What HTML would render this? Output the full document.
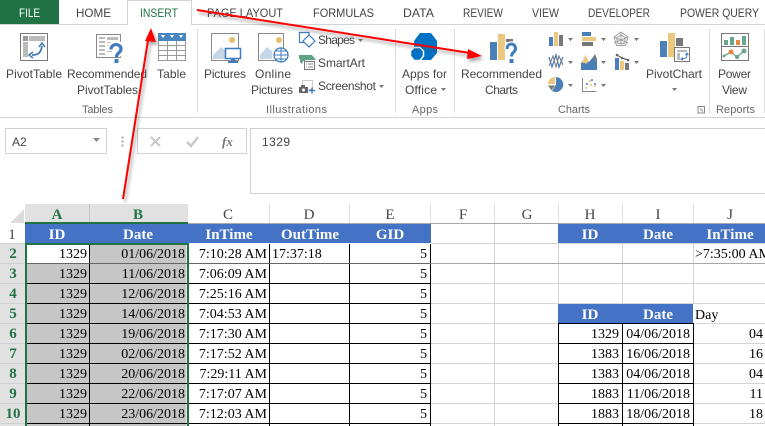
<!DOCTYPE html>
<html><head><meta charset="utf-8"><style>
html,body{margin:0;padding:0;background:#fff;width:765px;height:426px;overflow:hidden}
svg{display:block}
.u{font-family:"Liberation Sans",sans-serif;font-size:12px;fill:#444}
.t{font-family:"Liberation Sans",sans-serif;font-size:12px;fill:#444}
.g{font-family:"Liberation Sans",sans-serif;font-size:11px;fill:#666}
.c{font-family:"Liberation Serif",serif;font-size:14px;fill:#000}
.r{text-anchor:end}
.h{font-family:"Liberation Serif",serif;font-size:15px;font-weight:bold;fill:#fff;text-anchor:middle}
.l{font-family:"Liberation Serif",serif;font-size:15px;fill:#444;text-anchor:middle}
.s{font-family:"Liberation Serif",serif;font-size:15px;font-weight:bold;fill:#217346;text-anchor:middle}
</style></head><body>
<svg width="765" height="426" viewBox="0 0 765 426" xmlns="http://www.w3.org/2000/svg">
<defs><filter id="sh" x="-20%" y="-20%" width="140%" height="140%"><feGaussianBlur stdDeviation="1.5"/></filter></defs>
<rect width="765" height="426" fill="#fff"/>
<!-- tabs -->
<rect x="0" y="0" width="59" height="25" fill="#217346"/>
<rect x="0" y="24" width="765" height="1" fill="#d4d4d4"/>
<path d="M127.500 25V.5H191.500V25" fill="#fff" stroke="#d4d4d4"/>
<rect x="128" y="24" width="63" height="1" fill="#fff"/>
<text class="t" x="19" y="17" textLength="21" lengthAdjust="spacingAndGlyphs" style="fill:#fff">FILE</text>
<text class="t" x="76" y="17" textLength="35" lengthAdjust="spacingAndGlyphs">HOME</text>
<text class="t" x="140" y="17" textLength="38" lengthAdjust="spacingAndGlyphs" style="fill:#217346">INSERT</text>
<text class="t" x="207" y="17" textLength="76" lengthAdjust="spacingAndGlyphs">PAGE LAYOUT</text>
<text class="t" x="313" y="17" textLength="61" lengthAdjust="spacingAndGlyphs">FORMULAS</text>
<text class="t" x="403" y="17" textLength="31" lengthAdjust="spacingAndGlyphs">DATA</text>
<text class="t" x="463" y="17" textLength="40" lengthAdjust="spacingAndGlyphs">REVIEW</text>
<text class="t" x="532" y="17" textLength="27" lengthAdjust="spacingAndGlyphs">VIEW</text>
<text class="t" x="588" y="17" textLength="62" lengthAdjust="spacingAndGlyphs">DEVELOPER</text>
<text class="t" x="680" y="17" textLength="79" lengthAdjust="spacingAndGlyphs">POWER QUERY</text>
<!-- ribbon seps -->
<g fill="#dcdcdc"><rect x="197" y="29" width="1" height="84"/><rect x="395" y="29" width="1" height="84"/><rect x="454" y="29" width="1" height="84"/><rect x="709" y="29" width="1" height="84"/><rect x="764" y="29" width="1" height="84"/></g>
<rect x="0" y="117" width="765" height="1" fill="#d4d4d4"/>
<!-- ribbon labels -->
<text class="u" x="6" y="78" textLength="56">PivotTable</text>
<text class="u" x="67" y="78" textLength="80">Recommended</text>
<text class="u" x="77" y="94" textLength="61">PivotTables</text>
<text class="u" x="157" y="78" textLength="29">Table</text>
<text class="u" x="204" y="78" textLength="42">Pictures</text>
<text class="u" x="255" y="78" textLength="36">Online</text>
<text class="u" x="251" y="94" textLength="42">Pictures</text>
<text class="u" x="318" y="44" textLength="37">Shapes</text>
<text class="u" x="318" y="67" textLength="47">SmartArt</text>
<text class="u" x="318" y="90" textLength="58">Screenshot</text>
<text class="u" x="402" y="78" textLength="45">Apps for</text>
<text class="u" x="405" y="94" textLength="32">Office</text>
<text class="u" x="461" y="78" textLength="81">Recommended</text>
<text class="u" x="485" y="94" textLength="33">Charts</text>
<text class="u" x="646" y="78" textLength="56">PivotChart</text>
<text class="u" x="718" y="78" textLength="33">Power</text>
<text class="u" x="722" y="94" textLength="25">View</text>
<text class="g" x="82" y="113" textLength="31">Tables</text>
<text class="g" x="266" y="113" textLength="61">Illustrations</text>
<text class="g" x="412" y="113" textLength="26">Apps</text>
<text class="g" x="558" y="113" textLength="32">Charts</text>
<text class="g" x="716" y="113" textLength="39">Reports</text>
<!-- carets -->
<g fill="#777"><path d="M358 39h5l-2.500 3zM379 85h5l-2.500 3zM441 88h5l-2.500 3zM672 88h5l-2.500 3z"/>
<path d="M568 38h5l-2.500 3zM601 38h5l-2.500 3zM634 38h5l-2.500 3zM568 61h5l-2.500 3zM601 61h5l-2.500 3zM634 61h5l-2.500 3zM568 84h5l-2.500 3zM601 84h5l-2.500 3z"/></g>
<path d="M698 106.500h6.500v6.500h-6.500zM700 108.500l3 3" fill="none" stroke="#888"/>
<!-- PivotTable icon -->
<rect x="20.500" y="33.500" width="27" height="27" fill="#fff" stroke="#777"/>
<rect x="23" y="36" width="5" height="5" fill="#999"/><rect x="29" y="36" width="16" height="5" fill="#bbb"/><rect x="23" y="42" width="5" height="15" fill="#bbb"/>
<path d="M32 55c6 0 9-2 10-9" fill="none" stroke="#3d7ab5" stroke-width="1.800"/><path d="M39 47l3-4 3 4M33 52l-4 3 4 3" fill="none" stroke="#3d7ab5" stroke-width="1.500"/>
<!-- Rec PivotTables icon -->
<rect x="96.500" y="34.500" width="24" height="23" fill="#fff" stroke="#888"/>
<path d="M99 37h6v2h-6zM99 41h6v2h-6zM99 45h6v2h-6zM99 49h6v2h-6zM99 53h6v2h-6zM107 37h11v3h-11zM107 42h5v1h-5zM107 45h5v1h-5zM107 48h5v1h-5zM107 51h5v1h-5z" fill="#bbb"/>
<path d="M110 49.500c0-7.500 12-7.500 12-.5 0 4-5 4-5 8" fill="none" stroke="#fff" stroke-width="6"/>
<path d="M111 49.500c0-6.500 10-6.500 10-.5 0 4-4.500 3.500-4.500 8" fill="none" stroke="#3f7cbf" stroke-width="3.200"/><rect x="114.500" y="59" width="4" height="4" fill="#3f7cbf"/>
<!-- Table icon -->
<rect x="158" y="33" width="28" height="8" fill="#4a86c0"/>
<path d="M161 35h4l-2 3zM170 35h4l-2 3zM179 35h4l-2 3z" fill="#fff"/>
<path d="M158.500 41v19.500h27V41M158 45.500h28M158 50.500h28M158 55.500h28M167.500 41v19M176.500 41v19" fill="none" stroke="#999"/>
<!-- Pictures -->
<rect x="211.500" y="33.500" width="27" height="27" fill="#fff" stroke="#888"/>
<path d="M213 59v-4l8-8 5 4v8z" fill="#c4d6e8"/><circle cx="232" cy="40" r="3" fill="#e8bd70"/>
<rect x="225.500" y="48.500" width="15" height="10" fill="#fff" stroke="#3f7cbf" stroke-width="1.500"/><rect x="231" y="59" width="4" height="2" fill="#3f7cbf"/><rect x="228" y="61" width="10" height="2" fill="#3f7cbf"/>
<!-- Online pictures -->
<rect x="258.500" y="33.500" width="25" height="27" fill="#fff" stroke="#888"/>
<path d="M260 59v-4l7-8 5 4v8z" fill="#c4d6e8"/><circle cx="279" cy="40" r="3" fill="#e8bd70"/>
<circle cx="281" cy="55" r="7" fill="#fff" stroke="#3f7cbf" stroke-width="1.300"/><path d="M274 55h14M281 48v14M276 51h10M276 59h10" stroke="#3f7cbf" fill="none"/>
<!-- Shapes -->
<path d="M304 42.500h-4.500v-10h9.500v5" fill="none" stroke="#3f7cbf" stroke-width="1.200"/>
<path d="M309 35l6 6-6 6-6-6z" fill="#fff" stroke="#3f7cbf" stroke-width="1.200"/>
<!-- SmartArt -->
<path d="M299 55h13l4 5h-11v1h-2l-1 3-2-2v-3h-1z" fill="#5fa384"/><rect x="304.500" y="61.500" width="10" height="8" fill="#fff" stroke="#777"/><path d="M306 64h1M306 67h1M308 64h5M308 67h5" stroke="#888"/>
<!-- Screenshot -->
<rect x="302.500" y="80.500" width="10" height="9" fill="none" stroke="#999" stroke-dasharray="1 1"/>
<rect x="299" y="87" width="9" height="6" fill="#666"/><rect x="301" y="85" width="4" height="2" fill="#666"/><circle cx="303.500" cy="90" r="1.500" fill="#fff"/><path d="M309 90.500h6M312 87.500v6" stroke="#3f7cbf" stroke-width="1.500"/>
<!-- Apps -->
<path d="M420 33h11l6 8v12l-6 7h-11l-6-7v-12z" fill="#0072c6"/>
<path d="M414 47.500h6l3.500 3.500v5l-3.500 4.500h-6l-3.500-4.500v-5z" fill="#0072c6" stroke="#fff" stroke-width="1.500"/>
<!-- Rec charts -->
<rect x="490" y="42" width="7" height="18" fill="#4a7fb8"/><rect x="498" y="34" width="7" height="26" fill="#ecc77f"/><rect x="506" y="39" width="7" height="3" fill="#777"/>
<path d="M507 49c0-6.500 8.500-6.500 8.500-.5 0 4-4 3.500-4 8M511.500 58.500v4" fill="none" stroke="#fff" stroke-width="5.500"/>
<path d="M507 49c0-6.500 8.500-6.500 8.500-.5 0 4-4 3.500-4 8" fill="none" stroke="#3f7cbf" stroke-width="3"/><rect x="509.500" y="59" width="4" height="4" fill="#3f7cbf"/>
<!-- small charts -->
<rect x="549" y="37" width="4" height="9" fill="#4a7fb8"/><rect x="554" y="32" width="4" height="14" fill="#ecc77f"/><rect x="559" y="35" width="4" height="11" fill="#777"/>
<rect x="582" y="32" width="9" height="4" fill="#4a7fb8"/><rect x="582" y="37" width="14" height="4" fill="#ecc77f"/><rect x="582" y="42" width="11" height="4" fill="#777"/>
<path d="M621 32l7 5-2.500 8.500h-9L614 37zM621 35l4.500 3-1.500 5.500h-6l-1.500-5.500zM621 32v13.500M614 37l14 6M628 37l-14 6" fill="none" stroke="#a0a0a0"/>
<path d="M549 57l3 10 4-12 3 12 4-10" fill="none" stroke="#4a7fb8" stroke-width="1.300"/><path d="M549 66l4-10 3 11 3-11 4 9" fill="none" stroke="#777" stroke-width="1"/>
<path d="M581 70v-7l4-5 4 4 4-5 4 6v7z" fill="#4a7fb8"/><path d="M582 63l3-8 4 6-3 3-1-1z" fill="#ecc77f"/><path d="M593 57l2-3 2 5v4z" fill="#777"/>
<rect x="615" y="58" width="4" height="12" fill="#4a7fb8"/><rect x="620" y="61" width="4" height="9" fill="#ecc77f"/><rect x="625" y="63" width="4" height="7" fill="#777"/><path d="M617 55l5 3 6 2" stroke="#666" fill="none" stroke-width="1.300"/><circle cx="617" cy="55" r="1.300" fill="#666"/><circle cx="622" cy="58" r="1.300" fill="#666"/><circle cx="628" cy="60" r="1.300" fill="#666"/>
<path d="M556 77a7.500 7.500 0 1 1-4 14l4-6.500z" fill="#4a7fb8"/><path d="M548 84a7 7 0 0 1 7-7v7z" fill="#ecc77f"/><path d="M548 85.500h7l-3.500 5z" fill="#777"/>
<path d="M582.500 78v13.500h14" fill="none" stroke="#888"/><path d="M585 88h2M590 85h2M594 86h2M589 81h2" stroke="#e8bd70" stroke-width="1.500"/><path d="M591 80h2M594 84h2M586 84h2" stroke="#4a7fb8" stroke-width="1.500"/>
<!-- PivotChart -->
<rect x="660" y="41" width="7" height="16" fill="#4a7fb8"/><rect x="668" y="33" width="7" height="24" fill="#ecc77f"/><rect x="676" y="38" width="7" height="8" fill="#777"/>
<rect x="674.500" y="47.500" width="15" height="14" fill="#fff" stroke="#777"/><rect x="677" y="50" width="10" height="2" fill="#bbb"/><rect x="677" y="53" width="3" height="7" fill="#bbb"/><path d="M682 59c3 0 5-1 5-5M685 55l2-2 1.500 2M683 57.500l-2 1.500 2 1" fill="none" stroke="#3f7cbf"/>
<!-- Power View -->
<rect x="721.500" y="33.500" width="27" height="27" fill="#fff" stroke="#777"/>
<rect x="724" y="40" width="4" height="5" fill="#68a58a"/><rect x="730" y="37" width="4" height="8" fill="#68a58a"/><rect x="736" y="40" width="4" height="5" fill="#e8873e"/><rect x="742" y="36" width="4" height="9" fill="#68a58a"/>
<rect x="722" y="46" width="26" height="1" fill="#777"/>
<path d="M724 56l7-4 6 5 7-6" fill="none" stroke="#68a58a" stroke-width="1.300"/><circle cx="724" cy="56" r="1.500" fill="#68a58a"/><circle cx="731" cy="52" r="2.500" fill="#e8873e"/><circle cx="737" cy="57" r="2" fill="#68a58a"/><circle cx="744" cy="51" r="2.500" fill="#68a58a"/>
<!-- formula bar -->
<rect x="5.500" y="128.500" width="101" height="25" fill="#fff" stroke="#d0d0d0"/>
<text class="u" x="12" y="146" style="fill:#444">A2</text>
<path d="M93 138h7l-3.500 4z" fill="#888"/>
<path d="M122 137h1v1h-1zM122 141h1v1h-1zM122 145h1v1h-1z" stroke="#aaa" fill="#aaa"/>
<rect x="137.500" y="128.500" width="109" height="25" fill="#fff" stroke="#d0d0d0"/>
<path d="M151 137l9 9M160 137l-9 9" stroke="#c8c8c8" stroke-width="2" fill="none"/>
<path d="M187 142l4 4 7-9" stroke="#c8c8c8" stroke-width="2.500" fill="none"/>
<text x="222" y="146" style="font-family:'Liberation Serif',serif;font-style:italic;font-size:13px;font-weight:bold;fill:#777">fx</text>
<rect x="250.500" y="128.500" width="520" height="65" fill="#fff" stroke="#d0d0d0"/>
<text class="u" x="262" y="146" textLength="28">1329</text>
<!-- sheet -->
<g shape-rendering="crispEdges">
<rect x="0" y="204" width="765" height="20" fill="#fff"/>
<rect x="25" y="204" width="162" height="19" fill="#e1e1e1"/>
<path d="M10 223L24 209V223z" fill="#dcdcdc" shape-rendering="auto"/>
<g fill="#dedede"><rect x="89" y="204" width="1" height="19" fill="#c6c6c6"/><rect x="187" y="204" width="1" height="19"/><rect x="269" y="204" width="1" height="19"/><rect x="349" y="204" width="1" height="19"/><rect x="430" y="204" width="1" height="19"/><rect x="494" y="204" width="1" height="19"/><rect x="558" y="204" width="1" height="19"/><rect x="622" y="204" width="1" height="19"/><rect x="693" y="204" width="1" height="19"/></g>
<rect x="187" y="223" width="578" height="1" fill="#a8a8a8"/>
<rect x="0" y="243" width="25" height="183" fill="#e1e1e1"/>
<rect x="0" y="224" width="25" height="19" fill="#fff"/>
<g fill="#d0d0d0"><rect x="0" y="243" width="25" height="1"/><rect x="0" y="263" width="25" height="1"/><rect x="0" y="283" width="25" height="1"/><rect x="0" y="303" width="25" height="1"/><rect x="0" y="323" width="25" height="1"/><rect x="0" y="343" width="25" height="1"/><rect x="0" y="363" width="25" height="1"/><rect x="0" y="383" width="25" height="1"/><rect x="0" y="403" width="25" height="1"/><rect x="0" y="423" width="25" height="1"/></g>
<!-- gridlines -->
<g fill="#d4d4d4">
<rect x="431" y="243" width="334" height="1"/><rect x="431" y="283" width="334" height="1"/><rect x="431" y="303" width="334" height="1"/><rect x="431" y="323" width="127" height="1"/><rect x="431" y="343" width="127" height="1"/><rect x="431" y="363" width="127" height="1"/><rect x="431" y="383" width="127" height="1"/><rect x="431" y="403" width="127" height="1"/><rect x="431" y="423" width="127" height="1"/>
<rect x="494" y="224" width="1" height="202"/>
<rect x="558" y="244" width="1" height="60"/><rect x="622" y="244" width="1" height="60"/><rect x="693" y="244" width="1" height="60"/>
<rect x="693" y="323" width="72" height="1"/><rect x="693" y="343" width="72" height="1"/><rect x="693" y="363" width="72" height="1"/><rect x="693" y="383" width="72" height="1"/><rect x="693" y="403" width="72" height="1"/><rect x="693" y="423" width="72" height="1"/>
</g>
<rect x="431" y="263" width="334" height="1" fill="#a8a8a8"/>
<!-- header fills -->
<rect x="25" y="224" width="406" height="19" fill="#4472c4"/>
<rect x="558" y="224" width="207" height="19" fill="#4472c4"/>
<rect x="558" y="304" width="135" height="19" fill="#4472c4"/>
<!-- selection fill -->
<rect x="89" y="244" width="98" height="182" fill="#c6c6c6"/>
<rect x="27" y="264" width="62" height="162" fill="#c6c6c6"/>
<rect x="186" y="245" width="1" height="181" fill="#e6e6e6"/>
<!-- black lines -->
<g fill="#000">
<rect x="89" y="244" width="1" height="182"/><rect x="269" y="244" width="1" height="182"/><rect x="349" y="244" width="1" height="182"/><rect x="430" y="244" width="1" height="182"/>
<rect x="25" y="283" width="406" height="1"/><rect x="25" y="303" width="406" height="1"/><rect x="25" y="323" width="406" height="1"/><rect x="25" y="343" width="406" height="1"/><rect x="25" y="363" width="406" height="1"/><rect x="25" y="383" width="406" height="1"/><rect x="25" y="403" width="406" height="1"/><rect x="25" y="423" width="406" height="1"/>
<rect x="558" y="323" width="135" height="1"/><rect x="558" y="343" width="135" height="1"/><rect x="558" y="363" width="135" height="1"/><rect x="558" y="383" width="135" height="1"/><rect x="558" y="403" width="135" height="1"/><rect x="558" y="423" width="135" height="1"/>
<rect x="558" y="323" width="1" height="103"/><rect x="622" y="323" width="1" height="103"/><rect x="693" y="323" width="1" height="103"/>
</g>
<rect x="25" y="263" width="406" height="1" fill="#666"/>
<!-- selection border -->
<rect x="25" y="222" width="163" height="2" fill="#217346"/>
<rect x="25" y="243" width="164" height="2" fill="#217346"/>
<rect x="25" y="243" width="2" height="183" fill="#217346"/>
<rect x="187" y="243" width="2" height="183" fill="#217346"/>
</g>
<!-- col letters -->
<text class="s" x="57" y="219">A</text><text class="s" x="138" y="219">B</text>
<text class="l" x="228" y="219">C</text><text class="l" x="309" y="219">D</text><text class="l" x="390" y="219">E</text><text class="l" x="463" y="219">F</text><text class="l" x="527" y="219">G</text><text class="l" x="590" y="219">H</text><text class="l" x="658" y="219">I</text><text class="l" x="730" y="219">J</text>
<!-- row numbers -->
<text class="l" x="12" y="239">1</text>
<text class="s" x="13" y="258">2</text><text class="s" x="13" y="278">3</text><text class="s" x="13" y="298">4</text><text class="s" x="13" y="318">5</text><text class="s" x="13" y="338">6</text><text class="s" x="13" y="358">7</text><text class="s" x="13" y="378">8</text><text class="s" x="13" y="398">9</text><text class="s" x="13" y="418">10</text>
<!-- headers -->
<text class="h" x="57" y="239">ID</text><text class="h" x="138" y="239">Date</text><text class="h" x="229" y="239">InTime</text><text class="h" x="310" y="239">OutTime</text><text class="h" x="390" y="239">GID</text>
<text class="h" x="590" y="239">ID</text><text class="h" x="658" y="239">Date</text><text class="h" x="730" y="239">InTime</text>
<text class="h" x="590" y="319">ID</text><text class="h" x="658" y="319">Date</text>
<!-- data -->
<text class="c r" x="87" y="258">1329</text><text class="c r" x="185" y="258">01/06/2018</text><text class="c r" x="267" y="258">7:10:28 AM</text><text class="c" x="272" y="258">17:37:18</text><text class="c r" x="427" y="258">5</text>
<text class="c r" x="87" y="278">1329</text><text class="c r" x="185" y="278">11/06/2018</text><text class="c r" x="267" y="278">7:06:09 AM</text><text class="c r" x="427" y="278">5</text>
<text class="c r" x="87" y="298">1329</text><text class="c r" x="185" y="298">12/06/2018</text><text class="c r" x="267" y="298">7:25:16 AM</text><text class="c r" x="427" y="298">5</text>
<text class="c r" x="87" y="318">1329</text><text class="c r" x="185" y="318">14/06/2018</text><text class="c r" x="267" y="318">7:04:53 AM</text><text class="c r" x="427" y="318">5</text>
<text class="c r" x="87" y="338">1329</text><text class="c r" x="185" y="338">19/06/2018</text><text class="c r" x="267" y="338">7:17:30 AM</text><text class="c r" x="427" y="338">5</text>
<text class="c r" x="87" y="358">1329</text><text class="c r" x="185" y="358">02/06/2018</text><text class="c r" x="267" y="358">7:17:52 AM</text><text class="c r" x="427" y="358">5</text>
<text class="c r" x="87" y="378">1329</text><text class="c r" x="185" y="378">20/06/2018</text><text class="c r" x="267" y="378">7:29:11 AM</text><text class="c r" x="427" y="378">5</text>
<text class="c r" x="87" y="398">1329</text><text class="c r" x="185" y="398">22/06/2018</text><text class="c r" x="267" y="398">7:17:07 AM</text><text class="c r" x="427" y="398">5</text>
<text class="c r" x="87" y="418">1329</text><text class="c r" x="185" y="418">23/06/2018</text><text class="c r" x="267" y="418">7:12:03 AM</text><text class="c r" x="427" y="418">5</text>
<text class="c" x="695" y="258">&gt;7:35:00 AM</text>
<text class="c" x="695" y="319">Day</text>
<text class="c r" x="619" y="338">1329</text><text class="c r" x="690" y="338">04/06/2018</text><text class="c r" x="763" y="338">04</text>
<text class="c r" x="619" y="358">1383</text><text class="c r" x="690" y="358">16/06/2018</text><text class="c r" x="763" y="358">16</text>
<text class="c r" x="619" y="378">1383</text><text class="c r" x="690" y="378">04/06/2018</text><text class="c r" x="763" y="378">04</text>
<text class="c r" x="619" y="398">1883</text><text class="c r" x="690" y="398">11/06/2018</text><text class="c r" x="763" y="398">11</text>
<text class="c r" x="619" y="418">1883</text><text class="c r" x="690" y="418">18/06/2018</text><text class="c r" x="763" y="418">18</text>
<!-- arrows -->
<g filter="url(#sh)" opacity=".5" transform="translate(2 3)">
<path d="M123 199L148 40" stroke="#555" stroke-width="2" fill="none"/><path d="M151 28L145 41L156 42z" fill="#555"/>
<path d="M197 10L470 53" stroke="#555" stroke-width="2" fill="none"/><path d="M482 56L468 49L467 59z" fill="#555"/>
</g>
<path d="M123 199L148 40" stroke="#f00" stroke-width="2" fill="none"/><path d="M151 28L145 41L156 42z" fill="#f00"/>
<path d="M197 10L470 53" stroke="#f00" stroke-width="2" fill="none"/><path d="M482 56L468 49L467 59z" fill="#f00"/>
</svg>
</body></html>
